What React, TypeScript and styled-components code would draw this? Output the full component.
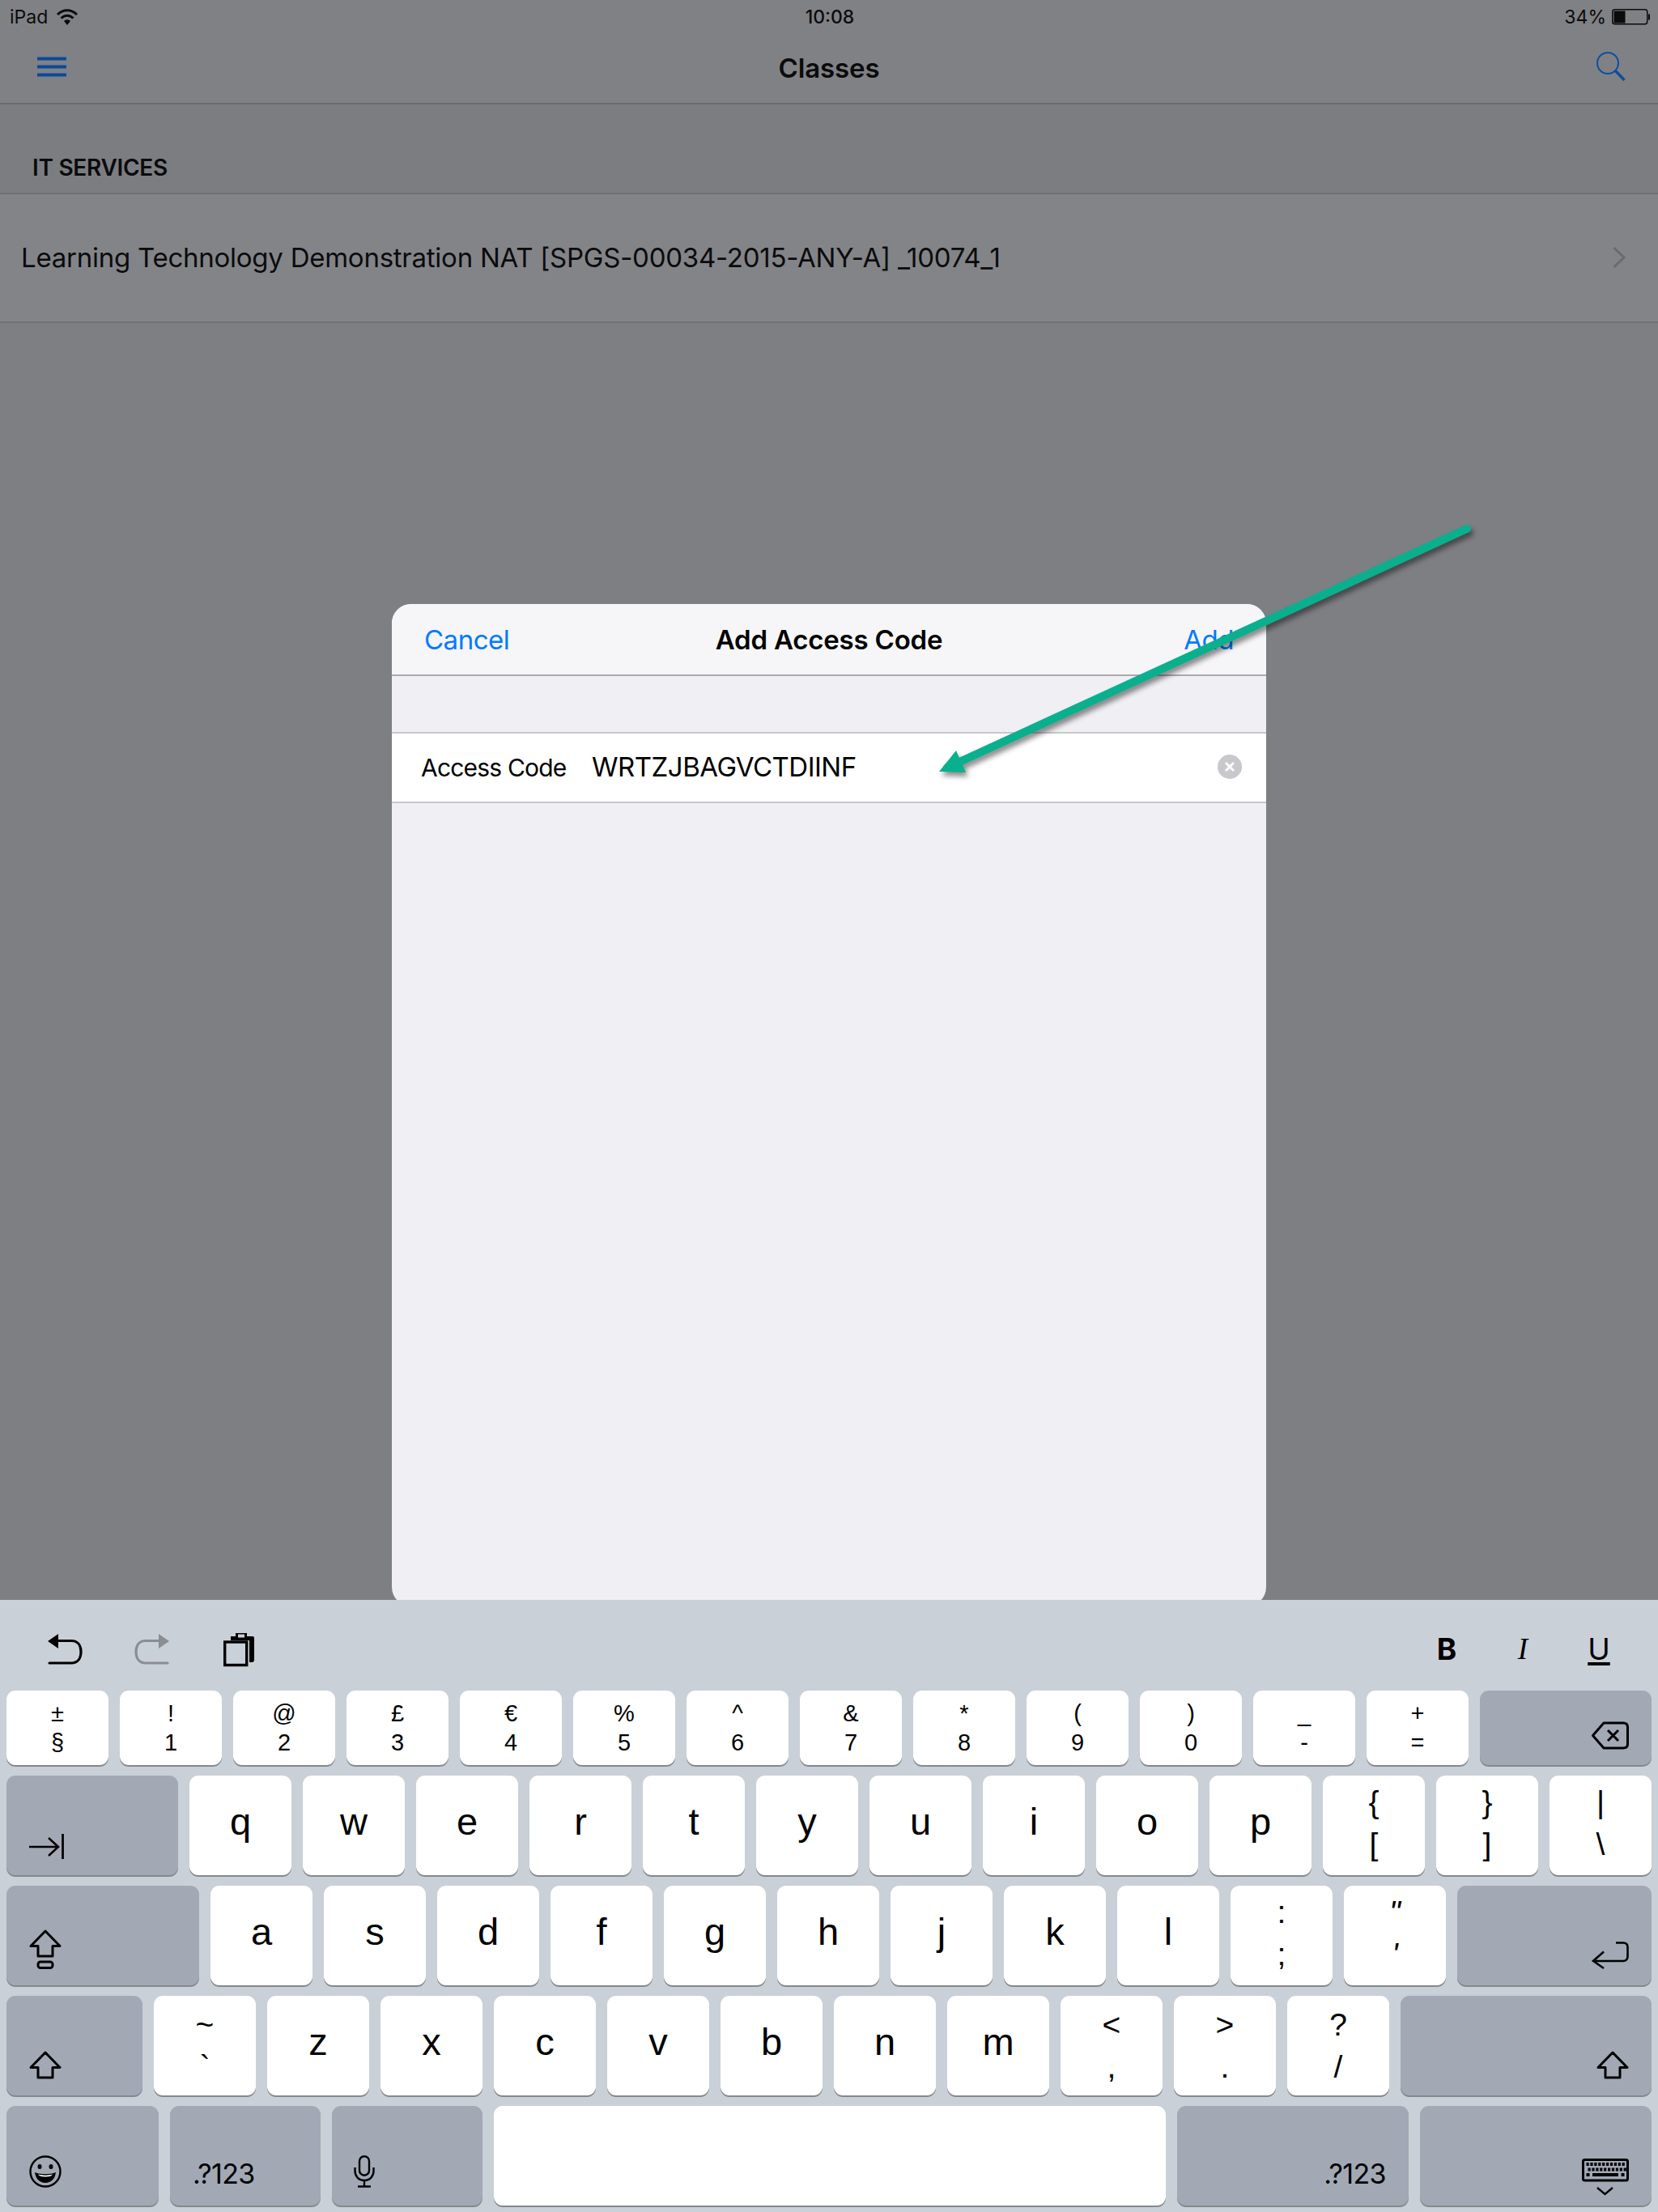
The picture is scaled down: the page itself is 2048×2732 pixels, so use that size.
import React from 'react';
import styled, { createGlobalStyle } from 'styled-components';

const GlobalStyle = createGlobalStyle`
  html, body {
    margin: 0;
    padding: 0;
    background: #7e7f83;
  }
  * {
    box-sizing: border-box;
  }
`;

const Page = styled.div`
  width: 2048px;
  height: 2732px;
  display: flex;
  flex-direction: column;
  overflow: hidden;
  font-family: Inter, "Liberation Sans", sans-serif;
  color: #000;
`;

const Screen = styled.div`
  position: relative;
  height: 1976px;
  flex: none;
  overflow: hidden;
  background: #7e7f83;
`;

const TopBar = styled.header`
  height: 129px;
  background: #808185;
  border-bottom: 2px solid #6a6b6f;
`;

const StatusBar = styled.div`
  height: 40px;
  padding: 2px 10px 0 12px;
  display: grid;
  grid-template-columns: 1fr auto 1fr;
  align-items: center;
  font-size: 23px;
  color: #0b0b0c;
`;

const StatusLeft = styled.div`
  display: flex;
  align-items: center;
  gap: 10px;
`;

const StatusTime = styled.div`
  font-weight: 500;
`;

const StatusRight = styled.div`
  display: flex;
  align-items: center;
  justify-content: flex-end;
  gap: 7px;
`;

const NavBar = styled.div`
  height: 87px;
  padding: 0 40px;
  display: grid;
  grid-template-columns: 1fr auto 1fr;
  align-items: center;
  justify-items: start;
`;

const NavMenu = styled.div`
  padding-left: 6px;
`;

const NavSearch = styled.div`
  justify-self: end;
`;

const NavTitle = styled.div`
  font-size: 33px;
  font-weight: 600;
  color: #0b0b0c;
  letter-spacing: -0.1px;
`;

const SectionHeader = styled.div`
  height: 111px;
  padding: 0 0 14px 40px;
  display: flex;
  align-items: flex-end;
  background: #7c7d81;
  border-bottom: 2px solid #6f7074;
  font-size: 28px;
  font-weight: 600;
  color: #0b0b0c;
  letter-spacing: -0.3px;
`;

const ClassRow = styled.div`
  height: 159px;
  padding: 0 40px 2px 26px;
  display: flex;
  align-items: center;
  justify-content: space-between;
  background: #838488;
  border-bottom: 2px solid #6f7074;
  font-size: 33px;
  color: #0b0b0c;
  letter-spacing: -0.25px;
`;

const Modal = styled.section`
  position: absolute;
  top: 746px;
  left: 484px;
  width: 1080px;
  height: 1238px;
  border-radius: 24px;
  overflow: hidden;
  background: #efeff4;
`;

const ModalHeader = styled.div`
  height: 89px;
  padding: 0 40px;
  display: grid;
  grid-template-columns: 1fr auto 1fr;
  align-items: center;
  background: #f6f6f8;
  border-bottom: 2px solid #a9a9ae;
`;

const HeaderButton = styled.div<{ $end?: boolean }>`
  font-size: 33px;
  color: #007aff;
  text-align: ${p => (p.$end ? 'right' : 'left')};
  letter-spacing: -0.5px;
`;

const ModalTitle = styled.div`
  font-size: 33px;
  font-weight: 600;
  letter-spacing: -0.2px;
`;

const Field = styled.div`
  margin-top: 69px;
  height: 88px;
  padding: 0 30px 2px 36px;
  display: flex;
  align-items: center;
  background: #fff;
  border-top: 2px solid #c8c7cc;
  border-bottom: 2px solid #c8c7cc;
`;

const FieldLabel = styled.div`
  width: 211px;
  padding-top: 2px;
  font-size: 30px;
  letter-spacing: -0.8px;
`;

const FieldValue = styled.div`
  flex: 1;
  font-size: 33px;
  letter-spacing: -0.5px;
`;

const Arrow = styled.svg`
  position: absolute;
  top: 0;
  left: 0;
  filter: drop-shadow(3px 5px 3px rgba(0, 0, 0, 0.45));
`;

const Keyboard = styled.div`
  flex: 1;
  padding: 0 8px;
  display: flex;
  flex-direction: column;
  gap: 13px;
  background: #cad0d7;
`;

const Toolbar = styled.div`
  height: 99px;
  padding: 22px 48px 0 50px;
  display: flex;
  align-items: center;
  justify-content: space-between;
`;

const ToolGroup = styled.div<{ $gap: number }>`
  display: flex;
  align-items: center;
  gap: ${p => p.$gap}px;
`;

const FormatLetter = styled.span<{ $kind: 'b' | 'i' | 'u' }>`
  width: 34px;
  text-align: center;
  font-size: 37px;
  line-height: 1;
  font-family: ${p => (p.$kind === 'i' ? '"Liberation Serif"' : 'Inter')}, serif;
  font-weight: ${p => (p.$kind === 'b' ? 700 : 400)};
  font-style: ${p => (p.$kind === 'i' ? 'italic' : 'normal')};
  text-decoration: ${p => (p.$kind === 'u' ? 'underline' : 'none')};
  text-decoration-thickness: 4px;
  text-underline-offset: 3px;
`;

const KeyRow = styled.div<{ $height: number }>`
  height: ${p => p.$height}px;
  display: flex;
  gap: 14px;
`;

const Key = styled.div<{ $w: number }>`
  width: ${p => p.$w}px;
  flex: none;
  border-radius: 11px;
  background: #fff;
  box-shadow: 0 2px 0 #85888d;
  font-family: "Liberation Sans", Arial, sans-serif;
  color: #000;
`;

const LetterKey = styled(Key)`
  display: flex;
  align-items: center;
  justify-content: center;
  padding-bottom: 10px;
  font-size: 47px;
  line-height: 1;
`;

const SymbolKey = styled(Key)<{ $small?: boolean; $lift?: number }>`
  display: flex;
  flex-direction: column;
  align-items: center;
  justify-content: center;
  padding-bottom: ${p => p.$lift ?? 0}px;
  font-size: ${p => (p.$small ? 29 : 39)}px;
  line-height: ${p => (p.$small ? 36 : 52)}px;
`;

const Slanted = styled.span`
  font-style: italic;
`;

const ActionKey = styled(Key)<{ $end?: boolean }>`
  display: flex;
  align-items: flex-end;
  justify-content: ${p => (p.$end ? 'flex-end' : 'flex-start')};
  padding: 0 28px 20px;
  background: #a2a9b5;
  font-family: Inter, sans-serif;
  font-size: 34px;
  line-height: 38px;
  letter-spacing: -0.6px;
`;

const Icon = styled.svg`
  display: block;
  overflow: visible;
  flex: none;
`;

const WifiIcon = () => (
  <Icon width="28" height="20" viewBox="0 0 28 20">
    <path d="M2 7 C9 0 19 0 26 7" fill="none" stroke="#0b0b0c" strokeWidth="3" />
    <path d="M6.5 11.5 C11 7 17 7 21.5 11.5" fill="none" stroke="#0b0b0c" strokeWidth="3" />
    <path d="M10 15 C12.5 12.8 15.5 12.8 18 15 L14 20 Z" fill="#0b0b0c" />
  </Icon>
);

const BatteryIcon = () => (
  <Icon width="47" height="20" viewBox="0 0 47 20">
    <rect x="0.75" y="0.75" width="43" height="18" rx="3" fill="none" stroke="#0b0b0c" strokeWidth="1.5" />
    <rect x="2.5" y="2.5" width="14" height="15" fill="#0b0b0c" />
    <rect x="45" y="6.5" width="2" height="7" fill="#0b0b0c" />
  </Icon>
);

const MenuIcon = () => (
  <Icon width="36" height="24" viewBox="0 1.5 36 24">
    <path d="M0 2 H36 M0 12 H36 M0 22 H36" stroke="#0a4a9b" strokeWidth="4" />
  </Icon>
);

const SearchIcon = () => (
  <Icon width="36" height="36" viewBox="0 2 36 36">
    <circle cx="14" cy="14" r="13" fill="none" stroke="#0c4f9e" strokeWidth="2" />
    <path d="M23.5 23.5 L34.5 35" stroke="#0c4f9e" strokeWidth="3.5" />
  </Icon>
);

const ChevronIcon = () => (
  <Icon width="16" height="26" viewBox="0 0 16 26">
    <path d="M1.5 1 L14 13 L1.5 25" fill="none" stroke="#696a6e" strokeWidth="3" />
  </Icon>
);

const ClearIcon = () => (
  <Icon width="30" height="30" viewBox="0 0 30 30">
    <circle cx="15" cy="15" r="15" fill="#c7c7cc" />
    <path d="M10 10 L20 20 M20 10 L10 20" stroke="#fff" strokeWidth="3" />
  </Icon>
);

const UndoIcon = ({ color }: { color: string }) => (
  <Icon width="44" height="40" viewBox="0 0 44 40">
    <path d="M1 10 L14 1 V19 Z" fill={color} />
    <path d="M13 9.5 H30 C38 9.5 42 15 42 23 C42 31 38 37 30 37 H3" fill="none" stroke={color} strokeWidth="3.2" strokeLinecap="round" />
  </Icon>
);

const RedoIcon = ({ color }: { color: string }) => (
  <Icon width="44" height="40" viewBox="0 0 44 40">
    <path d="M43 10 L30 1 V19 Z" fill={color} />
    <path d="M31 9.5 H14 C6 9.5 2 15 2 23 C2 31 6 37 14 37 H41" fill="none" stroke={color} strokeWidth="3.2" strokeLinecap="round" />
  </Icon>
);

const PasteIcon = () => (
  <Icon width="40" height="42" viewBox="-2 0 40 42">
    <path d="M9 10 V5 H15 V1 H29 V5 H36 Q38 5 38 7 V34 Q38 37 35 37 H32 V10 Z" fill="#000" />
    <rect x="18" y="2.5" width="8" height="4" fill="#cad0d7" />
    <rect x="1.7" y="12" width="27" height="28.5" fill="#cad0d7" stroke="#000" strokeWidth="3.4" />
  </Icon>
);

const DeleteIcon = () => (
  <Icon width="46" height="35" viewBox="0 -1 46 35">
    <path d="M1.5 17.5 L15 2 H39 Q44.5 2 44.5 7 V28 Q44.5 33 39 33 H15 Z" fill="none" stroke="#000" strokeWidth="3" strokeLinejoin="round" />
    <path d="M20 11 L33 24 M33 11 L20 24" stroke="#000" strokeWidth="3" />
  </Icon>
);

const TabIcon = () => (
  <Icon width="43" height="31" viewBox="0 0 43 31">
    <path d="M0 16 H36 M24 5 L36 16 L24 27" fill="none" stroke="#000" strokeWidth="2.6" />
    <path d="M41.5 0 V31" stroke="#000" strokeWidth="2.8" />
  </Icon>
);

const ShiftIcon = () => (
  <Icon width="40" height="35" viewBox="0 0 40 35">
    <path d="M20 2 L38 20.5 H29 V33 H11 V20.5 H2 Z" fill="none" stroke="#000" strokeWidth="3" strokeLinejoin="round" />
  </Icon>
);

const CapsIcon = () => (
  <Icon width="40" height="49" viewBox="0 0 40 49">
    <path d="M20 2 L38 20.5 H29 V33 H11 V20.5 H2 Z" fill="none" stroke="#000" strokeWidth="3" strokeLinejoin="round" />
    <rect x="11" y="40" width="18" height="7.5" rx="3" fill="none" stroke="#000" strokeWidth="3" />
  </Icon>
);

const ReturnIcon = () => (
  <Icon width="46" height="34" viewBox="0 0 46 34">
    <path d="M30 1.5 H39 Q44.5 1.5 44.5 7 V18 Q44.5 24 39 24 H3 M15 12.5 L2 24 L15 33" fill="none" stroke="#000" strokeWidth="2.6" />
  </Icon>
);

const EmojiIcon = () => (
  <Icon width="40" height="40" viewBox="0 2 40 40">
    <circle cx="20" cy="20" r="18.5" fill="none" stroke="#000" strokeWidth="2.4" />
    <ellipse cx="13" cy="14" rx="2.5" ry="3" fill="#000" />
    <ellipse cx="27" cy="14" rx="2.5" ry="3" fill="#000" />
    <path d="M7 21 C14 24 26 24 33 21 C32 29 27 34 20 34 C13 34 8 29 7 21 Z" fill="#000" />
    <path d="M11 23.5 C16 25 24 25 29 23.5 C28 25.5 25 26.5 20 26.5 C15 26.5 12 25.5 11 23.5 Z" fill="#fff" />
  </Icon>
);

const MicIcon = () => (
  <Icon width="26" height="40" viewBox="1 2 26 40">
    <rect x="7" y="1.2" width="12" height="23.5" rx="6" fill="none" stroke="#000" strokeWidth="2.4" />
    <path d="M1.5 15 V19 C1.5 26 6 31 13 31 C20 31 24.5 26 24.5 19 V15 M13 31 V38 M5 38.5 H21" fill="none" stroke="#000" strokeWidth="2.4" />
  </Icon>
);

const keyCaps = [0, 1].flatMap(row =>
  Array.from({ length: 10 }, (_, col) => ({ x: 5.5 + col * 4.9 + row * 2, y: 5 + row * 6.5 })),
);

const HideKeyboardIcon = () => (
  <Icon width="58" height="38" viewBox="0 0 58 38">
    <rect x="1.5" y="1.5" width="55" height="25.5" rx="2" fill="none" stroke="#000" strokeWidth="3" />
    {keyCaps.map(c => (
      <rect key={`${c.x}-${c.y}`} x={c.x} y={c.y} width="3.2" height="4" fill="#000" />
    ))}
    <rect x="5.5" y="18" width="4" height="4" fill="#000" />
    <rect x="13" y="18" width="32" height="4" fill="#000" />
    <rect x="48.5" y="18" width="4" height="4" fill="#000" />
    <path d="M19 36 L28.5 44 L38 36" fill="none" stroke="#000" strokeWidth="2.4" />
  </Icon>
);

const numberKeys = [
  ['±', '§'], ['!', '1'], ['@', '2'], ['£', '3'], ['€', '4'], ['%', '5'], ['^', '6'],
  ['&', '7'], ['*', '8'], ['(', '9'], [')', '0'], ['_', '-'], ['+', '='],
];

const App: React.FC = () => {
  const letter = (c: string) => <LetterKey key={c} $w={126}>{c}</LetterKey>;
  const symbol = (top: React.ReactNode, bottom: React.ReactNode, id: string, lift = 6) => (
    <SymbolKey key={id} $w={126} $lift={lift}>
      <span>{top}</span>
      <span>{bottom}</span>
    </SymbolKey>
  );

  return (
    <Page>
      <GlobalStyle />
      <Screen>
        <TopBar>
          <StatusBar>
            <StatusLeft>iPad <WifiIcon /></StatusLeft>
            <StatusTime>10:08</StatusTime>
            <StatusRight>34% <BatteryIcon /></StatusRight>
          </StatusBar>
          <NavBar>
            <NavMenu><MenuIcon /></NavMenu>
            <NavTitle>Classes</NavTitle>
            <NavSearch><SearchIcon /></NavSearch>
          </NavBar>
        </TopBar>
        <SectionHeader>IT SERVICES</SectionHeader>
        <ClassRow>
          Learning Technology Demonstration NAT [SPGS-00034-2015-ANY-A] _10074_1
          <ChevronIcon />
        </ClassRow>

        <Modal>
          <ModalHeader>
            <HeaderButton>Cancel</HeaderButton>
            <ModalTitle>Add Access Code</ModalTitle>
            <HeaderButton $end>Add</HeaderButton>
          </ModalHeader>
          <Field>
            <FieldLabel>Access Code</FieldLabel>
            <FieldValue>WRTZJBAGVCTDIINF</FieldValue>
            <ClearIcon />
          </Field>
        </Modal>

        <Arrow width="2048" height="1976" viewBox="0 0 2048 1976">
          <path d="M1812 653 L1170 948" stroke="#0ab08d" strokeWidth="10" strokeLinecap="round" />
          <path d="M1160 953 L1181 927 L1193 954 Z" fill="#0ab08d" />
        </Arrow>
      </Screen>

      <Keyboard>
        <Toolbar>
          <ToolGroup $gap={64}>
            <UndoIcon color="#000" />
            <RedoIcon color="#8a8d92" />
            <PasteIcon />
          </ToolGroup>
          <ToolGroup $gap={60}>
            <FormatLetter $kind="b">B</FormatLetter>
            <FormatLetter $kind="i">I</FormatLetter>
            <FormatLetter $kind="u">U</FormatLetter>
          </ToolGroup>
        </Toolbar>

        <KeyRow $height={92}>
          {numberKeys.map(([top, bottom]) => (
            <SymbolKey key={bottom} $w={126} $small>
              <span>{top}</span>
              <span>{bottom}</span>
            </SymbolKey>
          ))}
          <ActionKey $w={212} $end><DeleteIcon /></ActionKey>
        </KeyRow>

        <KeyRow $height={123}>
          <ActionKey $w={212}><TabIcon /></ActionKey>
          {'qwertyuiop'.split('').map(letter)}
          {symbol('{', '[', 'brace')}
          {symbol('}', ']', 'close')}
          {symbol('|', '\\', 'pipe')}
        </KeyRow>

        <KeyRow $height={123}>
          <ActionKey $w={238}><CapsIcon /></ActionKey>
          {'asdfghjkl'.split('').map(letter)}
          {symbol(':', ';', 'colon')}
          {symbol(<Slanted>"</Slanted>, <Slanted>'</Slanted>, 'quote')}
          <ActionKey $w={240} $end><ReturnIcon /></ActionKey>
        </KeyRow>

        <KeyRow $height={123}>
          <ActionKey $w={168}><ShiftIcon /></ActionKey>
          {symbol('~', '`', 'tilde', 0)}
          {'zxcvbnm'.split('').map(letter)}
          {symbol('<', ',', 'less', 0)}
          {symbol('>', '.', 'greater', 0)}
          {symbol('?', '/', 'question', 0)}
          <ActionKey $w={310} $end><ShiftIcon /></ActionKey>
        </KeyRow>

        <KeyRow $height={123}>
          <ActionKey $w={188}><EmojiIcon /></ActionKey>
          <ActionKey $w={186}>.?123</ActionKey>
          <ActionKey $w={186}><MicIcon /></ActionKey>
          <Key $w={830} />
          <ActionKey $w={286} $end>.?123</ActionKey>
          <ActionKey $w={286} $end><HideKeyboardIcon /></ActionKey>
        </KeyRow>
      </Keyboard>
    </Page>
  );
};

export default App;
